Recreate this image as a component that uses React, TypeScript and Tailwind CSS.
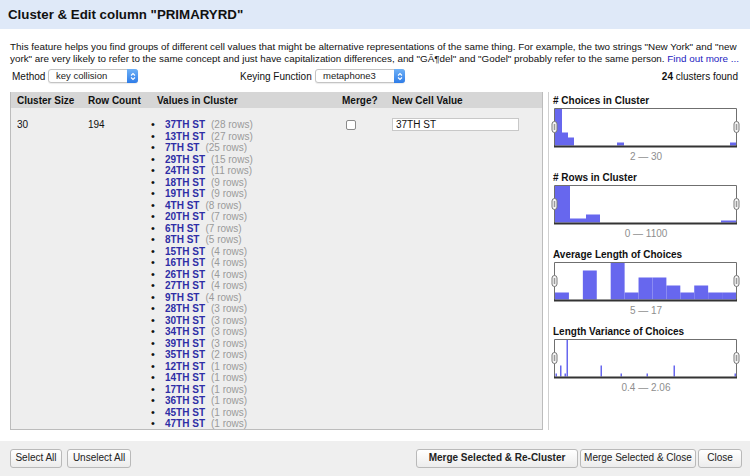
import React from 'react';

const values: [string, number][] = [
  ['37TH ST', 28], ['13TH ST', 27], ['7TH ST', 25], ['29TH ST', 15], ['24TH ST', 11],
  ['18TH ST', 9], ['19TH ST', 9], ['4TH ST', 8], ['20TH ST', 7], ['6TH ST', 7],
  ['8TH ST', 5], ['15TH ST', 4], ['16TH ST', 4], ['26TH ST', 4], ['27TH ST', 4],
  ['9TH ST', 4], ['28TH ST', 3], ['30TH ST', 3], ['34TH ST', 3], ['39TH ST', 3],
  ['35TH ST', 2], ['12TH ST', 1], ['14TH ST', 1], ['17TH ST', 1], ['36TH ST', 1],
  ['45TH ST', 1], ['47TH ST', 1],
];

// bars: [x, width, height] inside a 181 x 37 plot area
type Bar = [number, number, number];

const charts: { title: string; range: string; bars: Bar[] }[] = [
  {
    title: '# Choices in Cluster',
    range: '2 \u2014 30',
    bars: [[0, 7, 37], [7, 6, 13], [13, 6, 8], [62, 7, 3], [175, 6, 3]],
  },
  {
    title: '# Rows in Cluster',
    range: '0 \u2014 1100',
    bars: [[0, 15, 37], [15, 16, 4], [31, 14, 8], [166, 15, 2]],
  },
  {
    title: 'Average Length of Choices',
    range: '5 \u2014 17',
    bars: [7, 0, 29, 0, 37, 7, 22, 22, 14, 7, 14, 7, 7].map(
      (h, i) => [i * (181 / 13), 181 / 13, h] as Bar
    ),
  },
  {
    title: 'Length Variance of Choices',
    range: '0.4 \u2014 2.06',
    bars: [
      [0.5, 1.5, 3], [5, 1.5, 11], [9.5, 1.5, 3], [11.5, 1.5, 37], [45.5, 1.5, 11],
      [65.5, 1.5, 3], [91.5, 1.5, 3], [118.5, 1.5, 11], [179.5, 1.5, 3],
    ],
  },
];

function Handle({ x }: { x: number }) {
  return (
    <g>
      <rect x={x - 2.5} y={13.5} width={5} height={11} rx={2.5} fill="#f4f4f4" stroke="#7a7a7a" />
      <rect x={x - 0.75} y={16} width={1.5} height={6} fill="#9a9a9a" />
    </g>
  );
}

function Histogram({ bars }: { bars: Bar[] }) {
  return (
    <svg width={190} height={40} className="block">
      {bars.map(([x, w, h], i) =>
        h > 0 ? <rect key={i} x={4 + x} y={37.5 - h} width={w} height={h} fill="#6767ee" /> : null
      )}
      <path d="M3.5 38 V0.5 H185.5 V38" fill="none" stroke="#6f6f6f" />
      <line x1={3} y1={38.5} x2={186} y2={38.5} stroke="#333" strokeWidth={2} />
      <Handle x={3.5} />
      <Handle x={185.5} />
    </svg>
  );
}

function Select({ label }: { label: string }) {
  return (
    <div className="flex h-[14px] w-[90px] items-center rounded-[3px] border border-[#c4c4c4] bg-white shadow-[0_1px_1px_rgba(0,0,0,0.08)]">
      <span className="flex-1 pl-[7px] text-[9.5px] leading-none text-[#222]">{label}</span>
      <span className="flex h-[14px] w-[11px] items-center justify-center rounded-r-[3px] bg-gradient-to-b from-[#6fb1f6] to-[#2d7ce8] -mr-px">
        <svg width={6} height={9} viewBox="0 0 6 9">
          <path d="M1 3.5 L3 1.5 L5 3.5 M1 5.5 L3 7.5 L5 5.5" fill="none" stroke="#fff" strokeWidth={1.1} />
        </svg>
      </span>
    </div>
  );
}

function Button({ children, w, bold }: { children: React.ReactNode; w: string; bold?: boolean }) {
  return (
    <button
      className={`${w} h-[19px] rounded-[3px] border border-[#b9b9b9] bg-gradient-to-b from-white to-[#ececec] text-center text-[10px] leading-none text-[#222] ${bold ? 'font-bold' : ''}`}
    >
      {children}
    </button>
  );
}

export default function App() {
  return (
    <div className="flex h-[476px] w-[750px] flex-col overflow-hidden bg-white font-['Liberation_Sans',Arial,sans-serif] text-[#111]">
      {/* Title bar */}
      <div className="flex h-[29px] items-center bg-[#dfe9f8] pl-[8px] text-[13.3px] font-bold">
        Cluster &amp; Edit column "PRIMARYRD"
      </div>

      {/* Description */}
      <div className="whitespace-nowrap pl-[10px] pt-[12px] text-[9.85px] leading-[12px] text-[#111]">
        This feature helps you find groups of different cell values that might be alternative representations of the same thing. For example, the two strings "New York" and "new
        <br />
        york" are very likely to refer to the same concept and just have capitalization differences, and "GÃ¶del" and "Godel" probably refer to the same person.{' '}
        <span className="text-[#1b1bc0]">Find out more ...</span>
      </div>

      {/* Method row */}
      <div className="mt-[4px] flex h-[14px] items-center pl-[12px] pr-[12px] text-[10px]">
        <span className="w-[36px]">Method</span>
        <Select label="key collision" />
        <span className="ml-[102px] w-[75px]">Keying Function</span>
        <Select label="metaphone3" />
        <span className="ml-auto">
          <b>24</b> clusters found
        </span>
      </div>

      {/* Body */}
      <div className="mt-[9px] flex h-[338px]">
        <div className="ml-[10px] flex w-[533px] flex-col overflow-hidden border border-t-0 border-[#bcbcbc] bg-[#eeeeee]">
          <div className="grid h-[16px] shrink-0 grid-cols-[71px_69px_185px_50px_1fr] items-center bg-[#d6d6d6] pl-[6px] text-[10px] font-bold">
            <span>Cluster Size</span>
            <span>Row Count</span>
            <span>Values in Cluster</span>
            <span>Merge?</span>
            <span>New Cell Value</span>
          </div>
          <div className="grid grid-cols-[71px_69px_185px_50px_1fr] pl-[6px] pt-[11px] text-[10px] leading-[11.5px]">
            <span>30</span>
            <span>194</span>
            <div className="-ml-[6px] flex flex-col">
              {values.map(([v, n]) => (
                <div key={v} className="flex items-center whitespace-nowrap">
                  <span className="w-[14px] text-[11px] leading-none">&bull;</span>
                  <span className="font-bold text-[#2e2ea6]">{v}</span>
                  <span className="ml-[6px] text-[#9a9a9a]">({n} rows)</span>
                </div>
              ))}
            </div>
            <div className="pl-[4px] pt-[1px]">
              <div className="h-[10px] w-[10px] rounded-[2px] border border-[#8a8a8a] bg-white" />
            </div>
            <div className="-mt-[1px]">
              <div className="flex h-[13px] w-[127px] items-center border border-[#c8c8c8] bg-white pl-[3px] text-[10px]">
                37TH ST
              </div>
            </div>
          </div>
        </div>

        {/* Facets */}
        <div className="ml-[5px] flex-1 border-l border-[#d0d0d0] pl-[4px] pt-[3px]">
          {charts.map((c) => (
            <div key={c.title} className="mb-[9px]">
              <div className="text-[10px] font-bold leading-[12px]">{c.title}</div>
              <div className="-ml-[2px] mt-[1px]">
                <Histogram bars={c.bars} />
              </div>
              <div className="mt-[3px] w-[186px] text-center text-[10px] leading-[12px] text-[#8e8e8e]">
                {c.range}
              </div>
            </div>
          ))}
        </div>
      </div>

      {/* Footer */}
      <div className="mt-[11px] flex flex-1 items-center bg-[#efefef] px-[10px] pb-[1px]">
        <div className="flex gap-[5px]">
          <Button w="w-[52px]">Select All</Button>
          <Button w="w-[64px]">Unselect All</Button>
        </div>
        <div className="ml-auto mr-[-2px] flex gap-[2px]">
          <Button w="w-[162px]" bold>
            Merge Selected &amp; Re-Cluster
          </Button>
          <Button w="w-[116px]">Merge Selected &amp; Close</Button>
          <Button w="w-[44px]">Close</Button>
        </div>
      </div>
    </div>
  );
}
